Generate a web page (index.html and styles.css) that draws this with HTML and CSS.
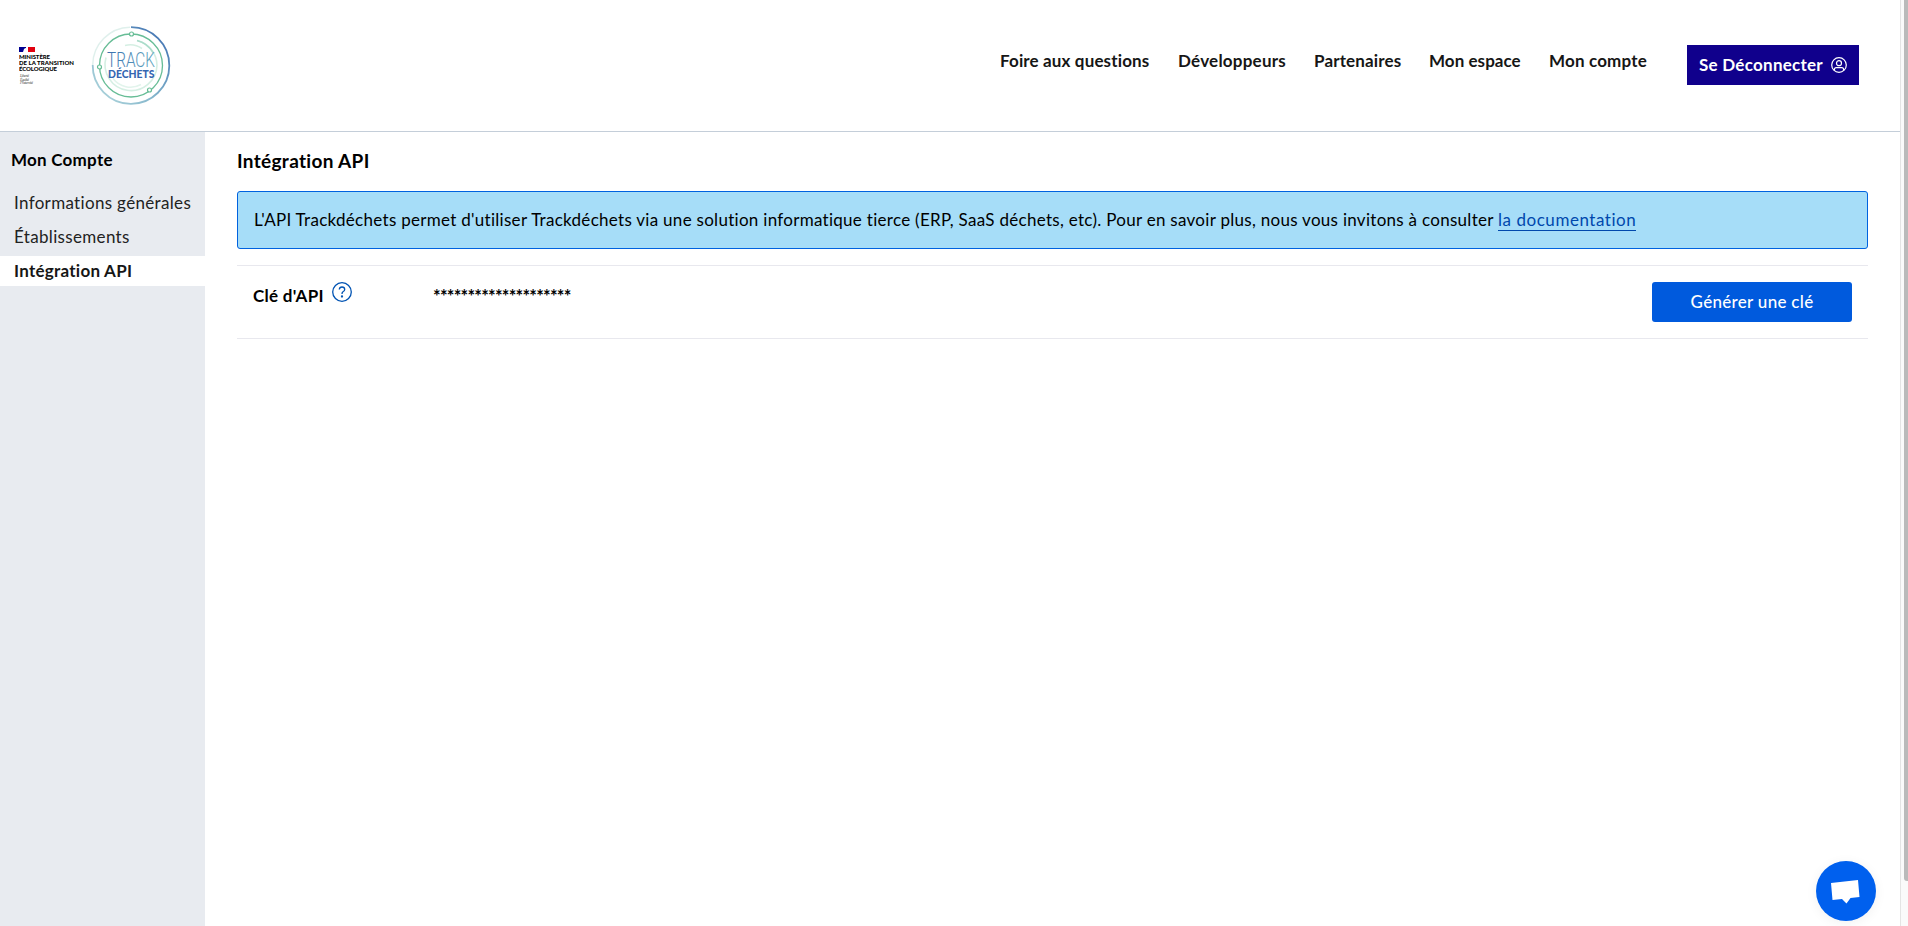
FILE: index.html
```
<!DOCTYPE html>
<html lang="fr">
<head>
<meta charset="utf-8">
<title>Trackdéchets – Mon compte</title>
<link rel="stylesheet" href="styles.css">
</head>
<body>
<header class="header">
  <div class="brand">
    <svg class="ministry" viewBox="0 0 60 40" width="60" height="40">
      <path fill="#000091" d="M0 0h7v5H0z"/><path fill="#fff" d="M5 2q2-2 4 0v3H4z"/><path fill="#e1000f" d="M9 0h7v5H9z"/>
      <g class="ministry-name"><text x="0" y="12.3" textLength="31">MINISTÈRE</text><text x="0" y="18.3" textLength="55">DE LA TRANSITION</text><text x="0" y="24.3" textLength="38">ÉCOLOGIQUE</text></g>
      <g class="ministry-motto"><text x="1" y="29.5" textLength="9">Liberté</text><text x="1" y="33.5" textLength="9">Égalité</text><text x="1" y="37.3" textLength="13">Fraternité</text></g>
    </svg>
    <svg class="logo" viewBox="0 0 80 80" width="80" height="80">
      <defs>
        <linearGradient id="ring" x1="0" y1="1" x2="1" y2="0"><stop offset="0" stop-color="#b5dade"/><stop offset=".45" stop-color="#82b4cb"/><stop offset="1" stop-color="#3768ae"/></linearGradient>
        <linearGradient id="word" x1="0" y1="0" x2="1" y2="0"><stop offset="0" stop-color="#3a6fae"/><stop offset="1" stop-color="#62a9c0"/></linearGradient>
      </defs>
      <g fill="none">
        <path d="M39 2.200A38 38 0 0 0 1.700 40" stroke="#dff0ec" stroke-width="1.500"/>
        <path d="M40 2.200A38.300 38.300 0 1 1 1.700 40" stroke="url(#ring)" stroke-width="1.800"/>
        <circle cx="40" cy="40.500" r="31.500" stroke="#67bd96" stroke-width="1.300"/>
        <path d="M46 15.500A26 26 0 0 1 66 40.500A26 26 0 1 1 15 32.500" stroke="#d5efe3" stroke-width="1.600"/>
        <path d="M46 15.500A26 26 0 0 1 62 27.500" stroke="#abdcca" stroke-width="1.600"/>
        <path d="M34 20.500A21 21 0 0 1 51 23.500" stroke="#d5efe3" stroke-width="1.600"/>
        <path d="M22 53.500A22 22 0 0 0 50 59.500" stroke="#e2f4ec" stroke-width="1.600"/>
        <g fill="#fff" stroke="#67bd96" stroke-width="1.200"><circle cx="40.500" cy="9" r="2"/><circle cx="8.500" cy="42" r="2"/><circle cx="58.500" cy="65" r="2"/></g>
      </g>
      <text class="logo-track" x="16" y="41.700" textLength="48" lengthAdjust="spacingAndGlyphs" fill="url(#word)">TRACK</text>
      <text class="logo-dechets" x="17" y="53" textLength="46.500" lengthAdjust="spacingAndGlyphs">DÉCHETS</text>
    </svg>
  </div>
  <nav class="nav">
    <a class="nav-link faq">Foire aux questions</a>
    <a class="nav-link dev">Développeurs</a>
    <a class="nav-link partners">Partenaires</a>
    <a class="nav-link space">Mon espace</a>
    <a class="nav-link account">Mon compte</a>
    <button class="logout"><span>Se Déconnecter</span>
      <svg viewBox="0 0 16 16" width="16" height="16" fill="none" stroke="currentColor" stroke-width="1.200"><circle cx="8" cy="8" r="7.300"/><circle cx="8" cy="6.200" r="2.500"/><path d="M3.400 13.400V12.500Q3.400 10.600 5.300 10.600H10.700Q12.600 10.600 12.600 12.500V13.400"/></svg>
    </button>
  </nav>
</header>
<div class="layout">
  <aside class="sidebar">
    <h1 class="sidebar-title">Mon Compte</h1>
    <a class="side-link">Informations générales</a>
    <a class="side-link">Établissements</a>
    <a class="side-link active">Intégration API</a>
  </aside>
  <main class="main">
    <h2 class="title">Intégration API</h2>
    <p class="notice">L'API Trackdéchets permet d'utiliser Trackdéchets via une solution informatique tierce (ERP, SaaS déchets, etc). Pour en savoir plus, nous vous invitons à consulter <a class="doc">la documentation</a></p>
    <section class="key-row">
      <div class="key-label"><span>Clé d'API</span>
        <svg viewBox="0 0 20 20" width="20" height="20" fill="none" stroke="#0053b3" stroke-width="1.300"><circle cx="10" cy="10" r="9.300"/><path d="M7.300 7.500Q7.500 5 10 5Q12.700 5 12.700 7.400Q12.700 8.800 11 9.700Q10 10.300 10 12"/><circle cx="10" cy="14.500" r=".5" fill="#0053b3"/></svg>
      </div>
      <div class="key-value">********************</div>
      <button class="generate">Générer une clé</button>
    </section>
  </main>
</div>
<div class="scrollbar"><div class="thumb"></div></div>
<button class="chat" aria-label="Chat"><svg viewBox="0 0 60 60" width="60" height="60"><path fill="#fff" d="M15 22 42 19 43.500 36 34.500 37 30.500 42.500 26 38 16.500 39z"/></svg></button>
</body>
</html>
```
FILE: styles.css
```
* { box-sizing: border-box; }
body { margin: 0; height: 926px; overflow: hidden; background: #fff; color: #000; font: 17px/24px Lato, sans-serif; font-variant-ligatures: none; display: flex; flex-direction: column; }
button { border: 0; font: inherit; }
.header { height: 132px; width: 1900px; flex: none; border-bottom: 1px solid #c4ced9; display: flex; justify-content: space-between; padding-right: 41px; }
.brand { display: flex; padding: 25px 0 0 19px; align-items: flex-start; }
.ministry { margin-top: 22px; }
.ministry-name { font: 900 6px Lato, sans-serif; }
.ministry-motto { font: italic 3.8px "Liberation Serif", serif; fill: #444; }
.logo { margin-left: 12px; overflow: visible; }
.logo-track { font: 300 21px Roboto, sans-serif; }
.logo-dechets { font: 900 11.5px Lato, sans-serif; fill: #3466b1; }
.nav { display: flex; align-items: flex-start; gap: 28px; padding-top: 49px; }
.nav-link { color: #161616; font-weight: 700; white-space: nowrap; }
.faq { width: 150px; letter-spacing: 0.14px; }
.dev { width: 108px; letter-spacing: 0.23px; }
.partners { width: 87px; letter-spacing: 0.14px; }
.space { width: 92px; letter-spacing: 0.05px; }
.account { width: 99px; letter-spacing: 0.17px; }
.logout { margin: -4px 0 0 11px; width: 172px; height: 40px; padding: 0 12px; background: #10008c; color: #fff; font-weight: 700; letter-spacing: 0.26px; display: flex; align-items: center; justify-content: space-between; white-space: nowrap; }
.layout { flex: 1; display: flex; width: 1900px; }
.sidebar { width: 205px; background: #e8ebf0; padding-top: 16px; display: flex; flex-direction: column; gap: 4px; }
.sidebar-title { margin: 0 0 12px; padding-left: 11px; font-size: 17px; line-height: 24px; font-weight: 700; letter-spacing: 0.25px; }
.side-link { height: 30px; line-height: 30px; padding-left: 14px; color: #222; white-space: nowrap; letter-spacing: 0.33px; }
.side-link.active { background: #fff; color: #161616; font-weight: 700; letter-spacing: 0.26px; }
.main { flex: 1; padding: 16px 32px 0; }
.title { margin: 0; font-size: 19px; line-height: 25px; font-weight: 700; letter-spacing: 0.32px; }
.notice { margin: 18px 0 16px; height: 58px; border: 1px solid #0062df; border-radius: 3px; background: #a6ddf8; padding: 16px; white-space: nowrap; letter-spacing: 0.288px; }
.doc { color: #0048ad; border-bottom: 1px solid #0048ad; letter-spacing: 0.54px; }
.key-row { height: 74px; border: solid #e8e8ee; border-width: 1px 0; padding: 16px; display: flex; }
.key-label { width: 180px; display: flex; gap: 8px; font-weight: 700; letter-spacing: 0.28px; }
.key-label span { padding-top: 2px; }
.key-value { flex: 1; padding-top: 2px; font-size: 18px; font-weight: 700; letter-spacing: -0.77px; }
.generate { width: 200px; height: 40px; border-radius: 3px; background: #005add; color: #fff; padding: 0; font-weight: 500; letter-spacing: 0.3px; }
.scrollbar { position: absolute; left: 1900px; top: 0; width: 8px; height: 926px; border-left: 1px solid #e4e4e4; background: #fafafa; padding-left: 3px; }
.thumb { height: 881px; background: #bababa; border-radius: 0 0 0 3px; }
.chat { position: absolute; left: 1816px; top: 861px; width: 60px; height: 60px; padding: 0; border-radius: 50%; background: #0060ee; box-shadow: 0 2px 12px rgba(0,0,0,.06); }
```
